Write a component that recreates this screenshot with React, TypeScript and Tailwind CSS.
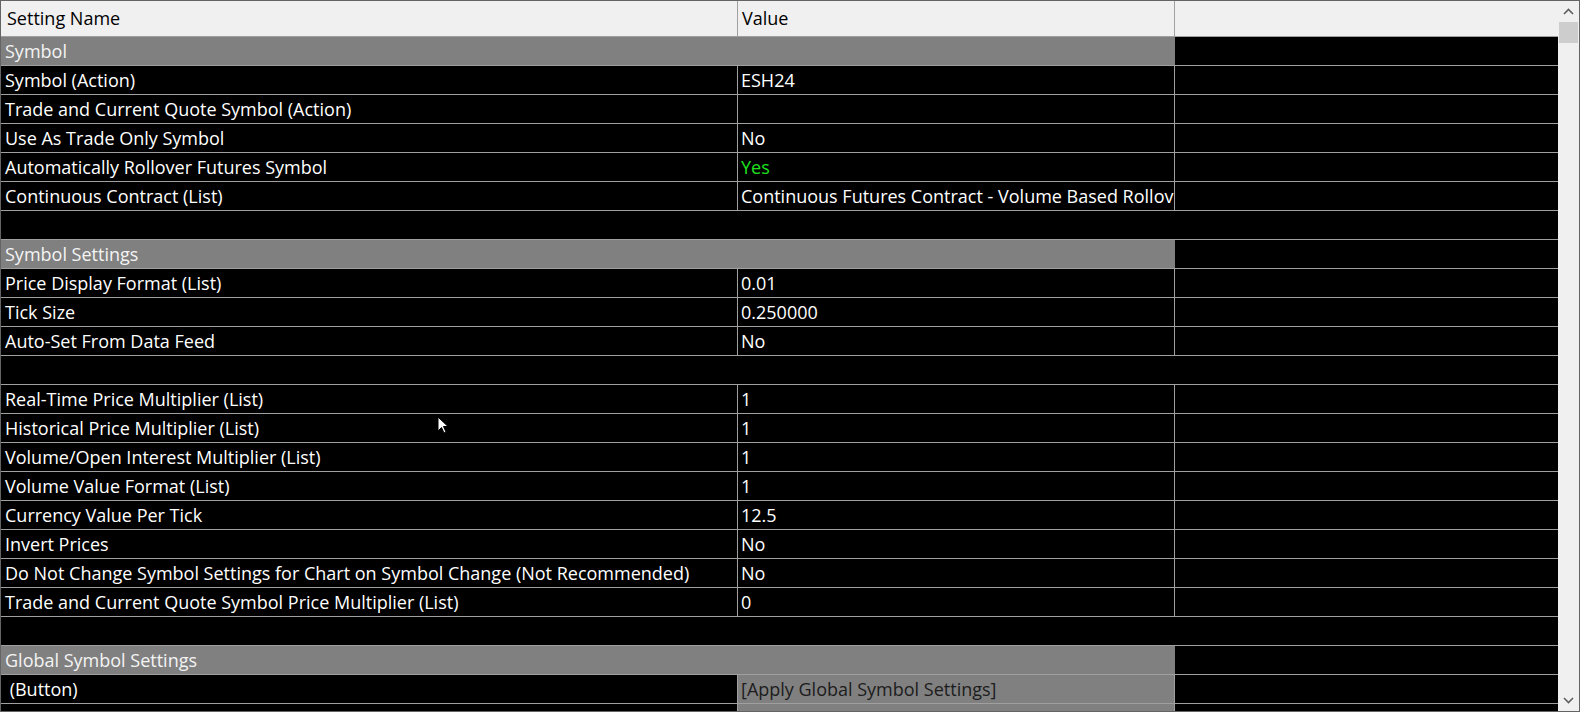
type Row =
  | { kind: "section"; name: string }
  | { kind: "blank" }
  | { kind: "item"; name: string; value: string; green?: boolean }
  | { kind: "button"; name: string; value: string };

const rows: Row[] = [
  { kind: "section", name: "Symbol" },
  { kind: "item", name: "Symbol (Action)", value: "ESH24" },
  { kind: "item", name: "Trade and Current Quote Symbol (Action)", value: "" },
  { kind: "item", name: "Use As Trade Only Symbol", value: "No" },
  { kind: "item", name: "Automatically Rollover Futures Symbol", value: "Yes", green: true },
  { kind: "item", name: "Continuous Contract (List)", value: "Continuous Futures Contract - Volume Based Rollover" },
  { kind: "blank" },
  { kind: "section", name: "Symbol Settings" },
  { kind: "item", name: "Price Display Format (List)", value: "0.01" },
  { kind: "item", name: "Tick Size", value: "0.250000" },
  { kind: "item", name: "Auto-Set From Data Feed", value: "No" },
  { kind: "blank" },
  { kind: "item", name: "Real-Time Price Multiplier (List)", value: "1" },
  { kind: "item", name: "Historical Price Multiplier (List)", value: "1" },
  { kind: "item", name: "Volume/Open Interest Multiplier (List)", value: "1" },
  { kind: "item", name: "Volume Value Format (List)", value: "1" },
  { kind: "item", name: "Currency Value Per Tick", value: "12.5" },
  { kind: "item", name: "Invert Prices", value: "No" },
  { kind: "item", name: "Do Not Change Symbol Settings for Chart on Symbol Change (Not Recommended)", value: "No" },
  { kind: "item", name: "Trade and Current Quote Symbol Price Multiplier (List)", value: "0" },
  { kind: "blank" },
  { kind: "section", name: "Global Symbol Settings" },
  { kind: "button", name: " (Button)", value: "[Apply Global Symbol Settings]" },
  // next row is scrolled just below the fold, only its top edge shows
  { kind: "button", name: "", value: "" },
];

const font = { fontFamily: '"Open Sans", "Noto Sans", sans-serif' };

function GridRow({ row }: { row: Row }) {
  const base = "h-[29px] shrink-0 flex border-b border-[#a0a0a0] text-[18px] leading-[28px]";
  if (row.kind === "blank") {
    return <div className={`${base} bg-black`} />;
  }
  if (row.kind === "section") {
    return (
      <div className={`${base} bg-black`}>
        <div className="w-[1174px] bg-[#808080] text-[#f4f4f4] pl-[4px] whitespace-nowrap overflow-hidden">
          {row.name}
        </div>
        <div className="flex-1" />
      </div>
    );
  }
  const isButton = row.kind === "button";
  const green = row.kind === "item" && row.green;
  return (
    <div className={`${base} bg-black text-white`}>
      <div className="w-[737px] border-r border-[#a0a0a0] pl-[4px] whitespace-pre overflow-hidden">
        {row.name}
      </div>
      <div
        className={`w-[437px] border-r border-[#a0a0a0] pl-[3px] whitespace-nowrap overflow-hidden ${
          isButton ? "bg-[#808080] text-[#1c1c1c]" : green ? "text-[#1ee21e]" : "text-white"
        }`}
      >
        {row.value}
      </div>
      <div className="flex-1" />
    </div>
  );
}

function Scrollbar() {
  return (
    <div className="w-[21px] shrink-0 bg-[#f0f0f0] flex flex-col items-center">
      <div className="h-[21px] w-full flex items-center justify-center">
        <svg width="11" height="7" viewBox="0 0 11 7">
          <path d="M1 6 L5.5 1.5 L10 6" fill="none" stroke="#606060" strokeWidth="1.6" />
        </svg>
      </div>
      <div className="w-[19px] h-[21px] bg-[#cdcdcd]" />
      <div className="flex-1" />
      <div className="h-[21px] w-full flex items-center justify-center">
        <svg width="11" height="7" viewBox="0 0 11 7">
          <path d="M1 1 L5.5 5.5 L10 1" fill="none" stroke="#606060" strokeWidth="1.6" />
        </svg>
      </div>
    </div>
  );
}

export default function App() {
  return (
    <div
      className="relative w-[1580px] h-[712px] border border-[#646464] flex overflow-hidden bg-black"
      style={font}
    >
      <div className="flex-1 flex flex-col overflow-hidden">
        {/* Column header */}
        <div className="h-[36px] shrink-0 flex bg-[#f0f0f0] border-b border-[#a0a0a0] text-[18px] text-black">
          <div className="w-[737px] border-r border-[#a0a0a0] pl-[6px] flex items-center">Setting Name</div>
          <div className="w-[437px] border-r border-[#a0a0a0] pl-[4px] flex items-center">Value</div>
          <div className="flex-1" />
        </div>
        {rows.map((row, i) => (
          <GridRow key={i} row={row} />
        ))}
      </div>
      <Scrollbar />

      {/* mouse pointer */}
      <svg
        className="absolute left-[436px] top-[415px]"
        width="12"
        height="19"
        viewBox="0 0 12 19"
      >
        <path d="M1 1 L1 15 L4.5 11.5 L7 17 L9 16 L6.5 10.5 L11 10.5 Z" fill="white" stroke="black" strokeWidth="1" />
      </svg>
    </div>
  );
}
